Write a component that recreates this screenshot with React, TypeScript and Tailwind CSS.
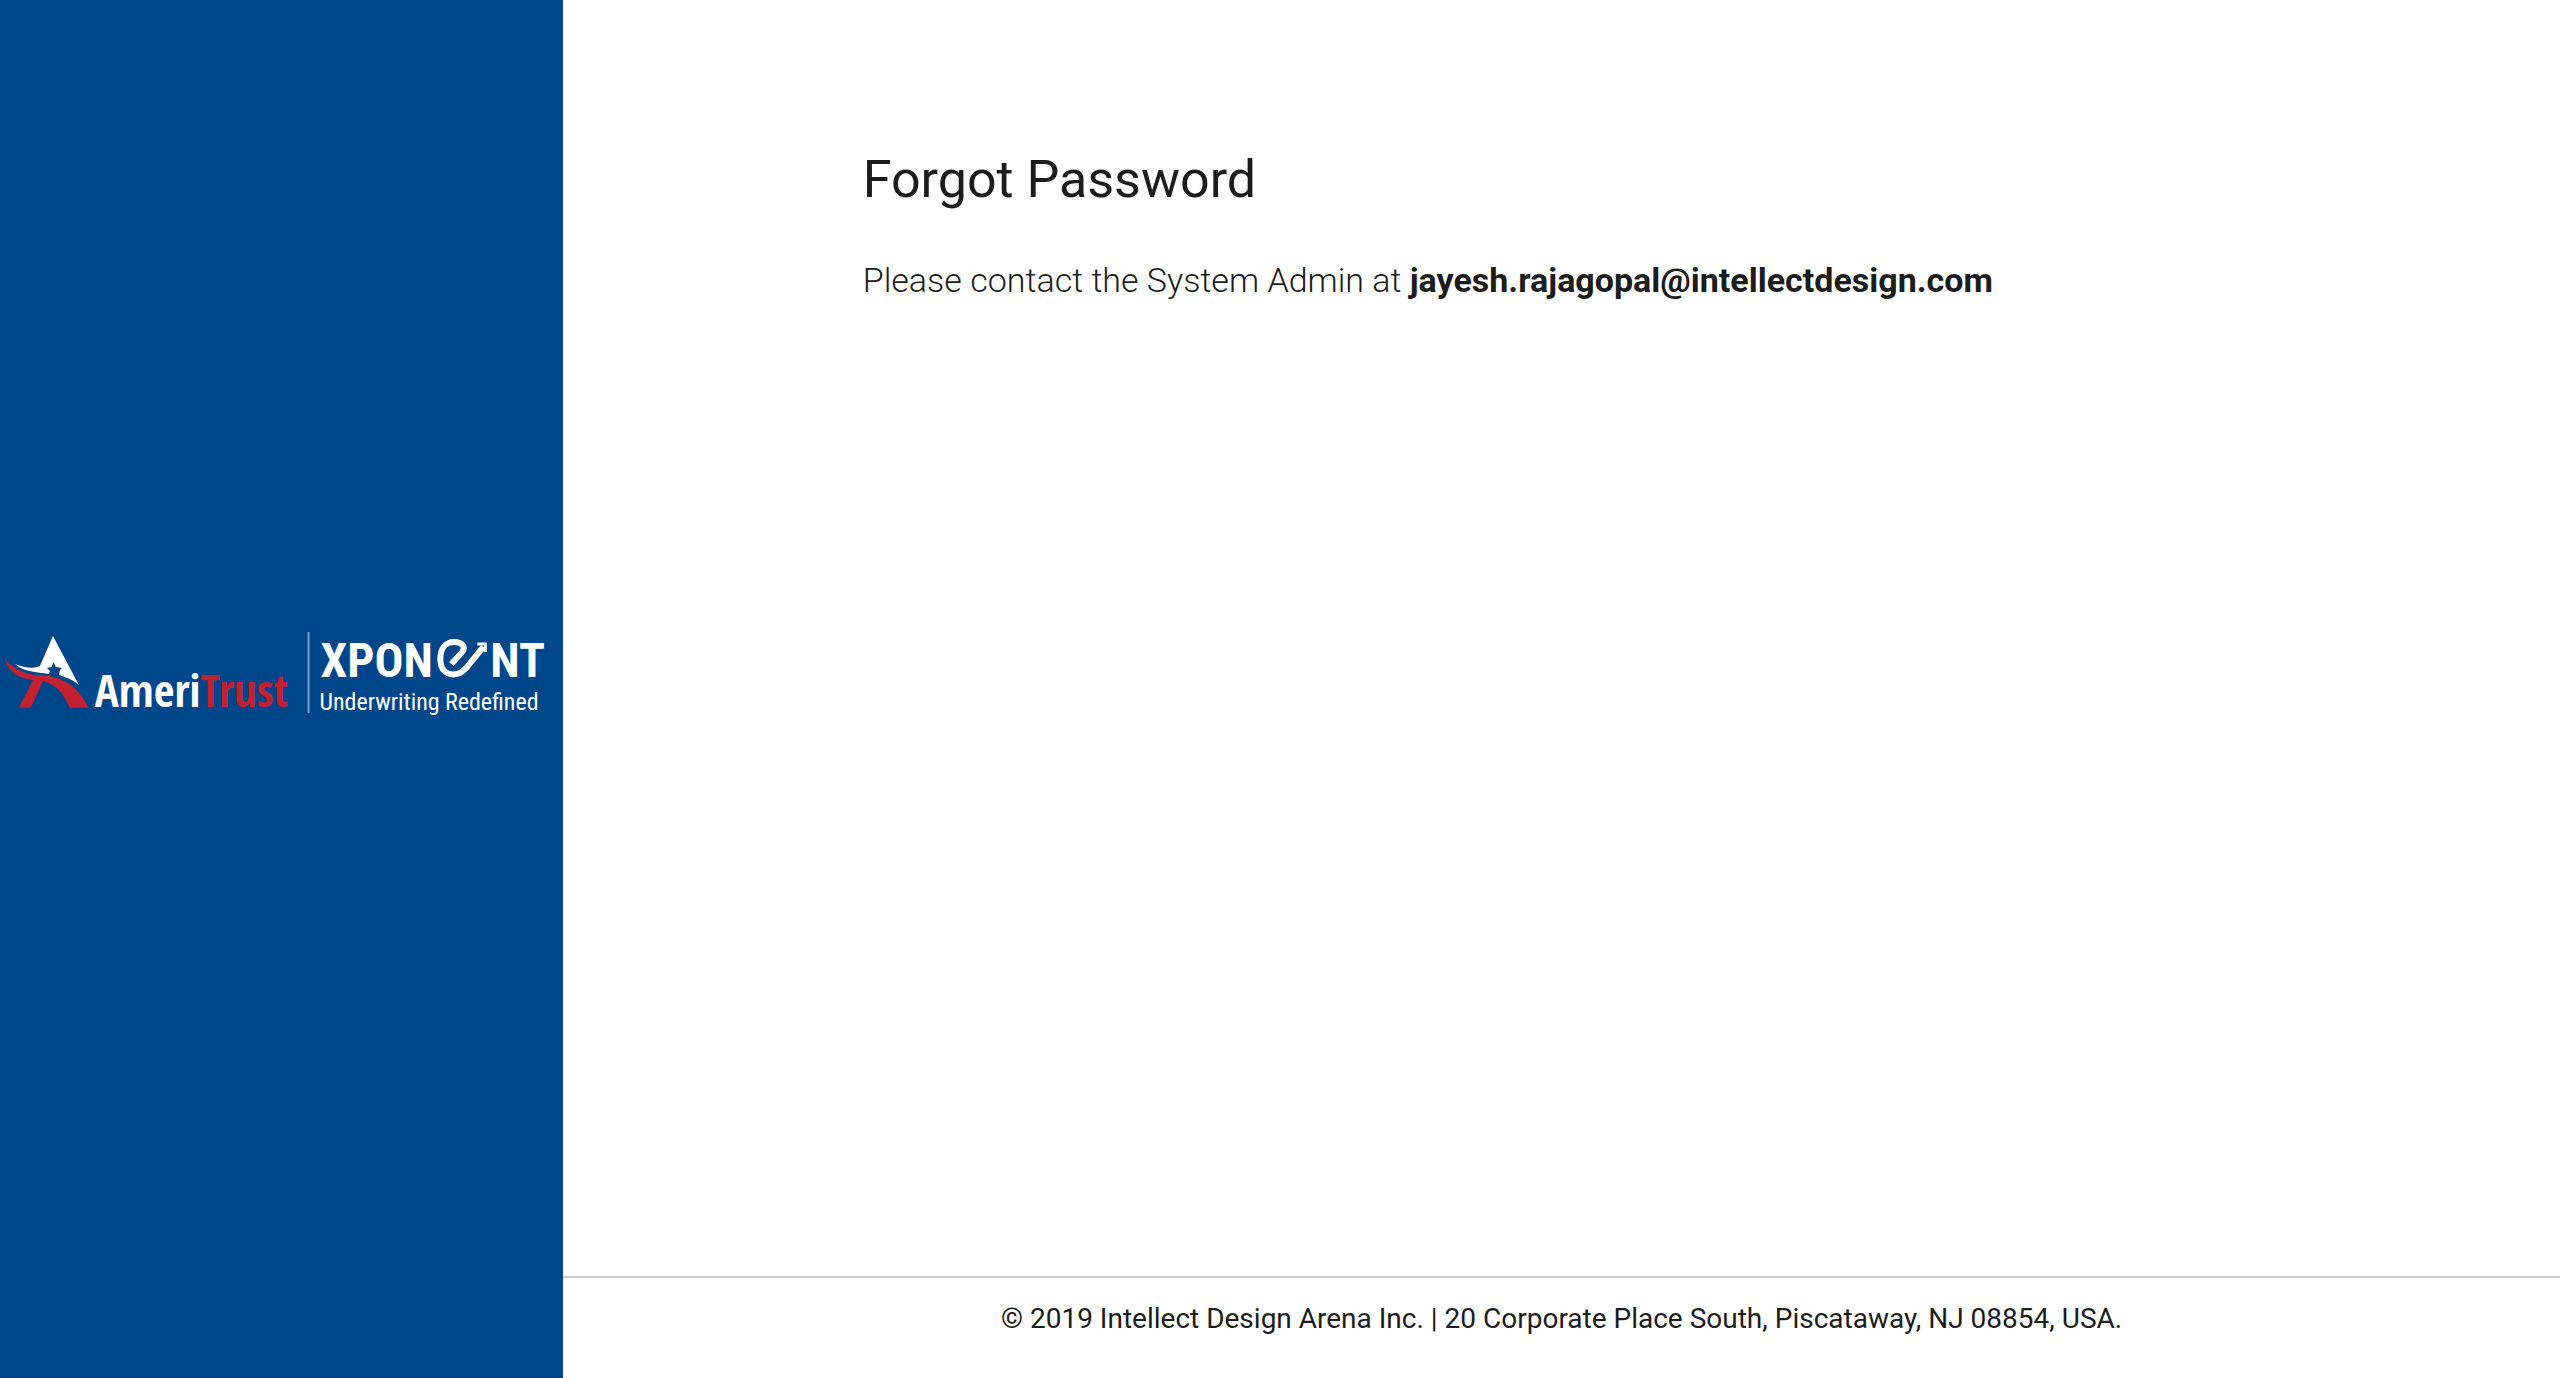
function Logo() {
  return (
    <svg
      viewBox="0 -1 564 138"
      className="w-full"
      role="img"
      aria-label="AmeriTrust Xponent, Underwriting Redefined"
    >
      <path
        d="M53 16 L79 65 C73 60 66 57 59 55 L60 50 L62 48 L56 47 L53.500 42 L51.500 47 L47 48 L50 51 L49 54 C36 52 24 52 15 44 C25 48 33 49 40 46 Z"
        fill="#ffffff"
      />
      <path
        d="M5 39 C14 50 24 53 36 55 C64 55 78 67 89 88 L70 88 C64 74 56 64 43 61 L31 88 L19 88 L33 60 C18 58 8 52 5 39 Z"
        fill="#c4202f"
      />
      <text
        x="95"
        y="87"
        fontFamily="'Open Sans Condensed', 'Noto Sans Condensed', 'Liberation Sans Narrow', Lato, sans-serif"
        fontSize="45"
        fontWeight="600"
        fill="#ffffff"
      >
        Ameri<tspan fill="#c4202f">Trust</tspan>
      </text>
      <path d="M309 12 V93" stroke="#809fc5" strokeWidth="2" />
      <g
        fill="#ffffff"
        fontFamily="'Roboto Condensed', 'Liberation Sans Narrow', Roboto, sans-serif"
        fontSize="48"
        fontWeight="700"
      >
        <text x="321" y="57">XPON</text>
        <text x="491" y="57">NT</text>
      </g>
      <g fill="none" stroke="#ffffff">
        <path
          d="M452 44 L463 32 C467 26 462 22 455 22 C446 22 441 29 441 39 C441 49 446 54.500 454 54.500 C460 54.500 463 52 467 48 L484 27"
          strokeWidth="6"
        />
        <path d="M478 24 L486 24 L486 32" strokeWidth="3" />
      </g>
      <text x="320" y="90" fontFamily="'Roboto Condensed', Roboto, sans-serif" fontSize="24" fill="#ffffff">
        Underwriting Redefined
      </text>
    </svg>
  );
}

export default function App() {
  return (
    <div className="flex min-h-screen bg-white font-[Roboto,sans-serif] text-[#1c1c1c]">
      <aside className="flex w-[22%] shrink-0 flex-col justify-center border-b-2 border-[#003f80] bg-[#00468b]">
        <Logo />
      </aside>
      <div className="flex min-w-0 flex-1 flex-col">
        <main className="flex-1 px-[15%] pt-[148px]">
          <h1 className="text-[52px] leading-[64px]">Forgot Password</h1>
          <p className="mt-11 text-[34px] leading-[48px] font-light">
            Please contact the System Admin at{" "}
            <strong className="font-bold">jayesh.rajagopal@intellectdesign.com</strong>
          </p>
        </main>
        <footer className="border-t-2 border-[#cccccc] pt-[22px] pb-10 text-center text-[28px] leading-[38px]">
          © 2019 Intellect Design Arena Inc. | 20 Corporate Place South, Piscataway, NJ 08854, USA.
        </footer>
      </div>
    </div>
  );
}
